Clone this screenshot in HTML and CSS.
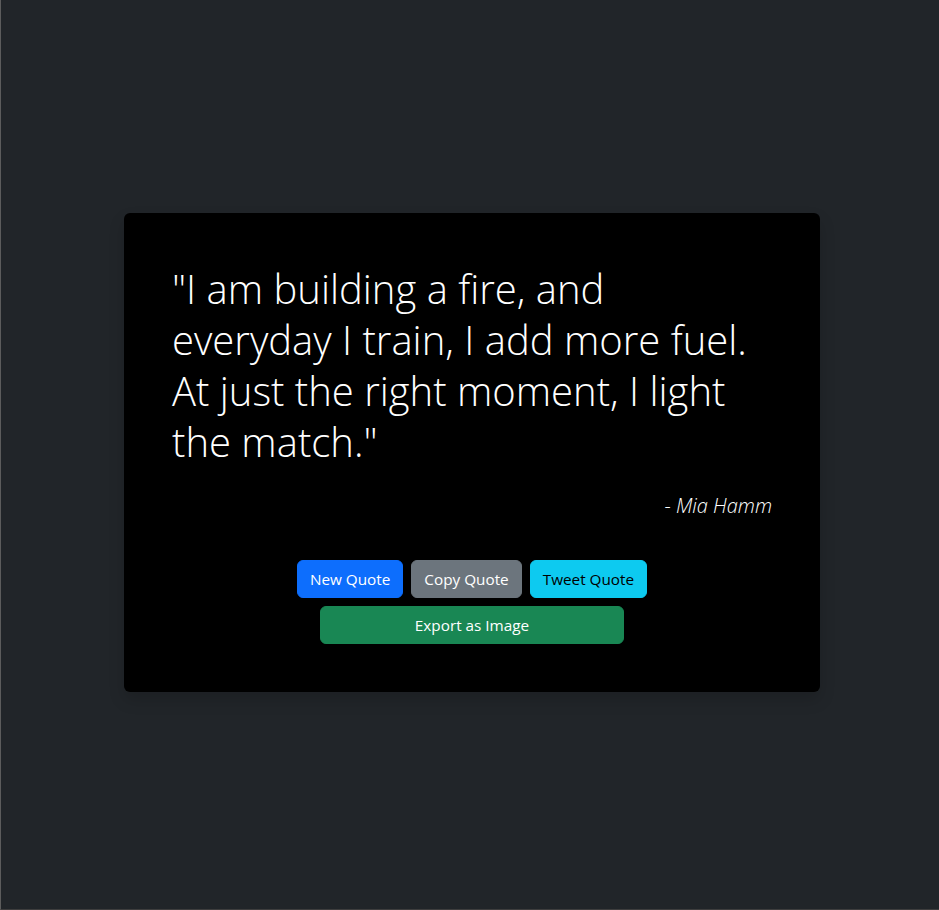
FILE: index.html
```html
<!DOCTYPE html>
<html lang="en">
<head>
<meta charset="utf-8">
<title>Random Quote Machine</title>
<link rel="stylesheet" href="styles.css">
</head>
<body>
<div class="page">
  <div class="quote-card" id="quote-box">
    <blockquote class="quote-text" id="text">"I am building a fire, and everyday I train, I add more fuel. At just the right moment, I light the match."</blockquote>
    <p class="quote-author" id="author">- Mia Hamm</p>
    <div class="actions">
      <div class="action-row">
        <button class="btn btn-primary" id="new-quote">New Quote</button>
        <button class="btn btn-secondary">Copy Quote</button>
        <button class="btn btn-info">Tweet Quote</button>
      </div>
      <div class="action-row">
        <button class="btn btn-success btn-wide">Export as Image</button>
      </div>
    </div>
  </div>
</div>
</body>
</html>
```
FILE: styles.css
```css
html, body {
  margin: 0;
  padding: 0;
}
body {
  background: #212529;
  font-family: "Open Sans", "Noto Sans", sans-serif;
}
.page {
  box-sizing: border-box;
  height: 910px;
  border-left: 1px solid #5c5c5c;
  border-bottom: 1px solid #3e3e3e;
  display: flex;
  align-items: center;
  justify-content: center;
}
.quote-card {
  box-sizing: border-box;
  width: 696px;
  background: #000;
  border-radius: 6px;
  padding: 50px 48px 48px;
  box-shadow: 0 8px 16px rgba(0, 0, 0, 0.15);
  margin-left: 4px;
  margin-bottom: 4px;
}
.quote-text {
  margin: 0;
  color: #fff;
  font-weight: 300;
  font-size: 40px;
  line-height: 51px;
}
.quote-author {
  margin: 24px 0 0;
  color: #fff;
  text-align: right;
  font-style: italic;
  font-weight: 300;
  font-size: 20px;
  line-height: 30px;
}
.actions {
  margin-top: 39px;
  display: flex;
  flex-direction: column;
  align-items: center;
  gap: 8px;
}
.action-row {
  display: flex;
  gap: 8px;
  justify-content: center;
}
.btn {
  font-family: "Open Sans", "Noto Sans", sans-serif;
  font-size: 15.3px;
  line-height: 24px;
  padding: 6px 12px;
  border: 1px solid transparent;
  border-radius: 6px;
  color: #fff;
  cursor: pointer;
}
.btn-primary { background: #0d6efd; border-color: #0d6efd; }
.btn-secondary { background: #6c757d; border-color: #6c757d; }
.btn-info { background: #0dcaf0; border-color: #0dcaf0; color: #000; }
.btn-success { background: #198754; border-color: #198754; }
.btn-wide { width: 304px; }
```
